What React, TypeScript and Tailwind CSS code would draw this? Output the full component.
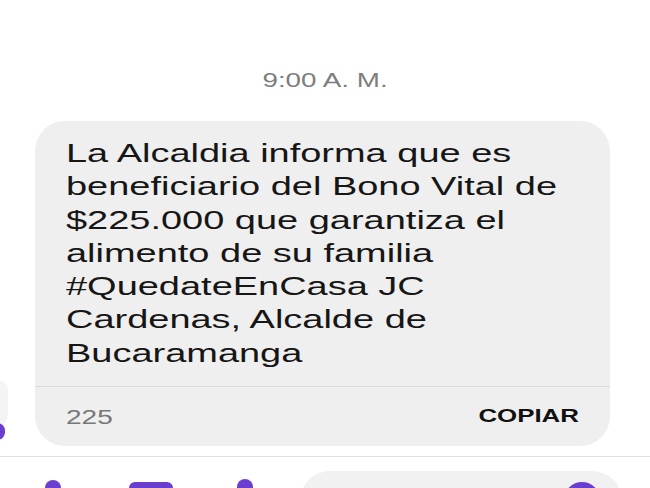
import React from "react";

const lines = [
	"La Alcaldia informa que es",
	"beneficiario del Bono Vital de",
	"$225.000 que garantiza el",
	"alimento de su familia",
	"#QuedateEnCasa JC",
	"Cardenas, Alcalde de",
	"Bucaramanga",
];

export default function App() {
	return (
		<div
			className="relative flex h-[488px] w-[650px] flex-col overflow-hidden bg-white"
			style={{ fontFamily: "'Liberation Sans', Arial, sans-serif" }}
		>
			{/* edge of an avatar on the left */}
			<div className="absolute top-[380px] left-[-14px] h-[46px] w-[22px] rounded-full bg-[#f4f4f4]" />
			<div className="absolute top-[423px] left-[-10px] h-[17px] w-[15px] rounded-full bg-[#6a3fd0]" />

			<div className="flex h-[121px] items-end justify-center pb-[31px]">
				<span className="inline-block origin-center scale-x-[1.39] text-[20px] leading-none text-[#7d7d7d]">
					9:00 A. M.
				</span>
			</div>

			<div className="ml-[35px] flex w-[575px] flex-col rounded-[30px] bg-[#efefef]">
				<div className="px-[31px] pt-[16px] pb-[16px] text-[26px] leading-[33.3px] text-[#161616]">
					{lines.map((l) => (
						<div key={l} className="origin-left scale-x-[1.46] whitespace-nowrap">
							{l}
						</div>
					))}
				</div>
				<div className="h-px bg-[#dadada]" />
				<div className="flex h-[59px] items-center justify-between px-[31px]">
					<span className="inline-block origin-left scale-x-[1.4] text-[20px] text-[#777]">
						225
					</span>
					<span className="inline-block origin-right scale-x-[1.36] text-[19px] font-bold text-[#111]">
						COPIAR
					</span>
				</div>
			</div>

			<div className="mt-[10px] h-px bg-[#e2e2e2]" />

			<div className="relative flex flex-1 items-end">
				<div className="ml-[45px] h-[8px] w-[16px] rounded-t-full bg-[#6a3fd0]" />
				<div className="ml-[68px] h-[6px] w-[44px] rounded-t-[6px] bg-[#6a3fd0]" />
				<div className="ml-[64px] h-[9px] w-[16px] rounded-t-full bg-[#6a3fd0]" />
				<div className="absolute top-[14px] left-[300px] flex h-[60px] w-[322px] justify-end rounded-[30px] bg-[#f1f1f1] pt-[11px] pr-[22px]">
					<div className="h-[36px] w-[36px] rounded-full bg-[#6a3fd0]" />
				</div>
			</div>
		</div>
	);
}
